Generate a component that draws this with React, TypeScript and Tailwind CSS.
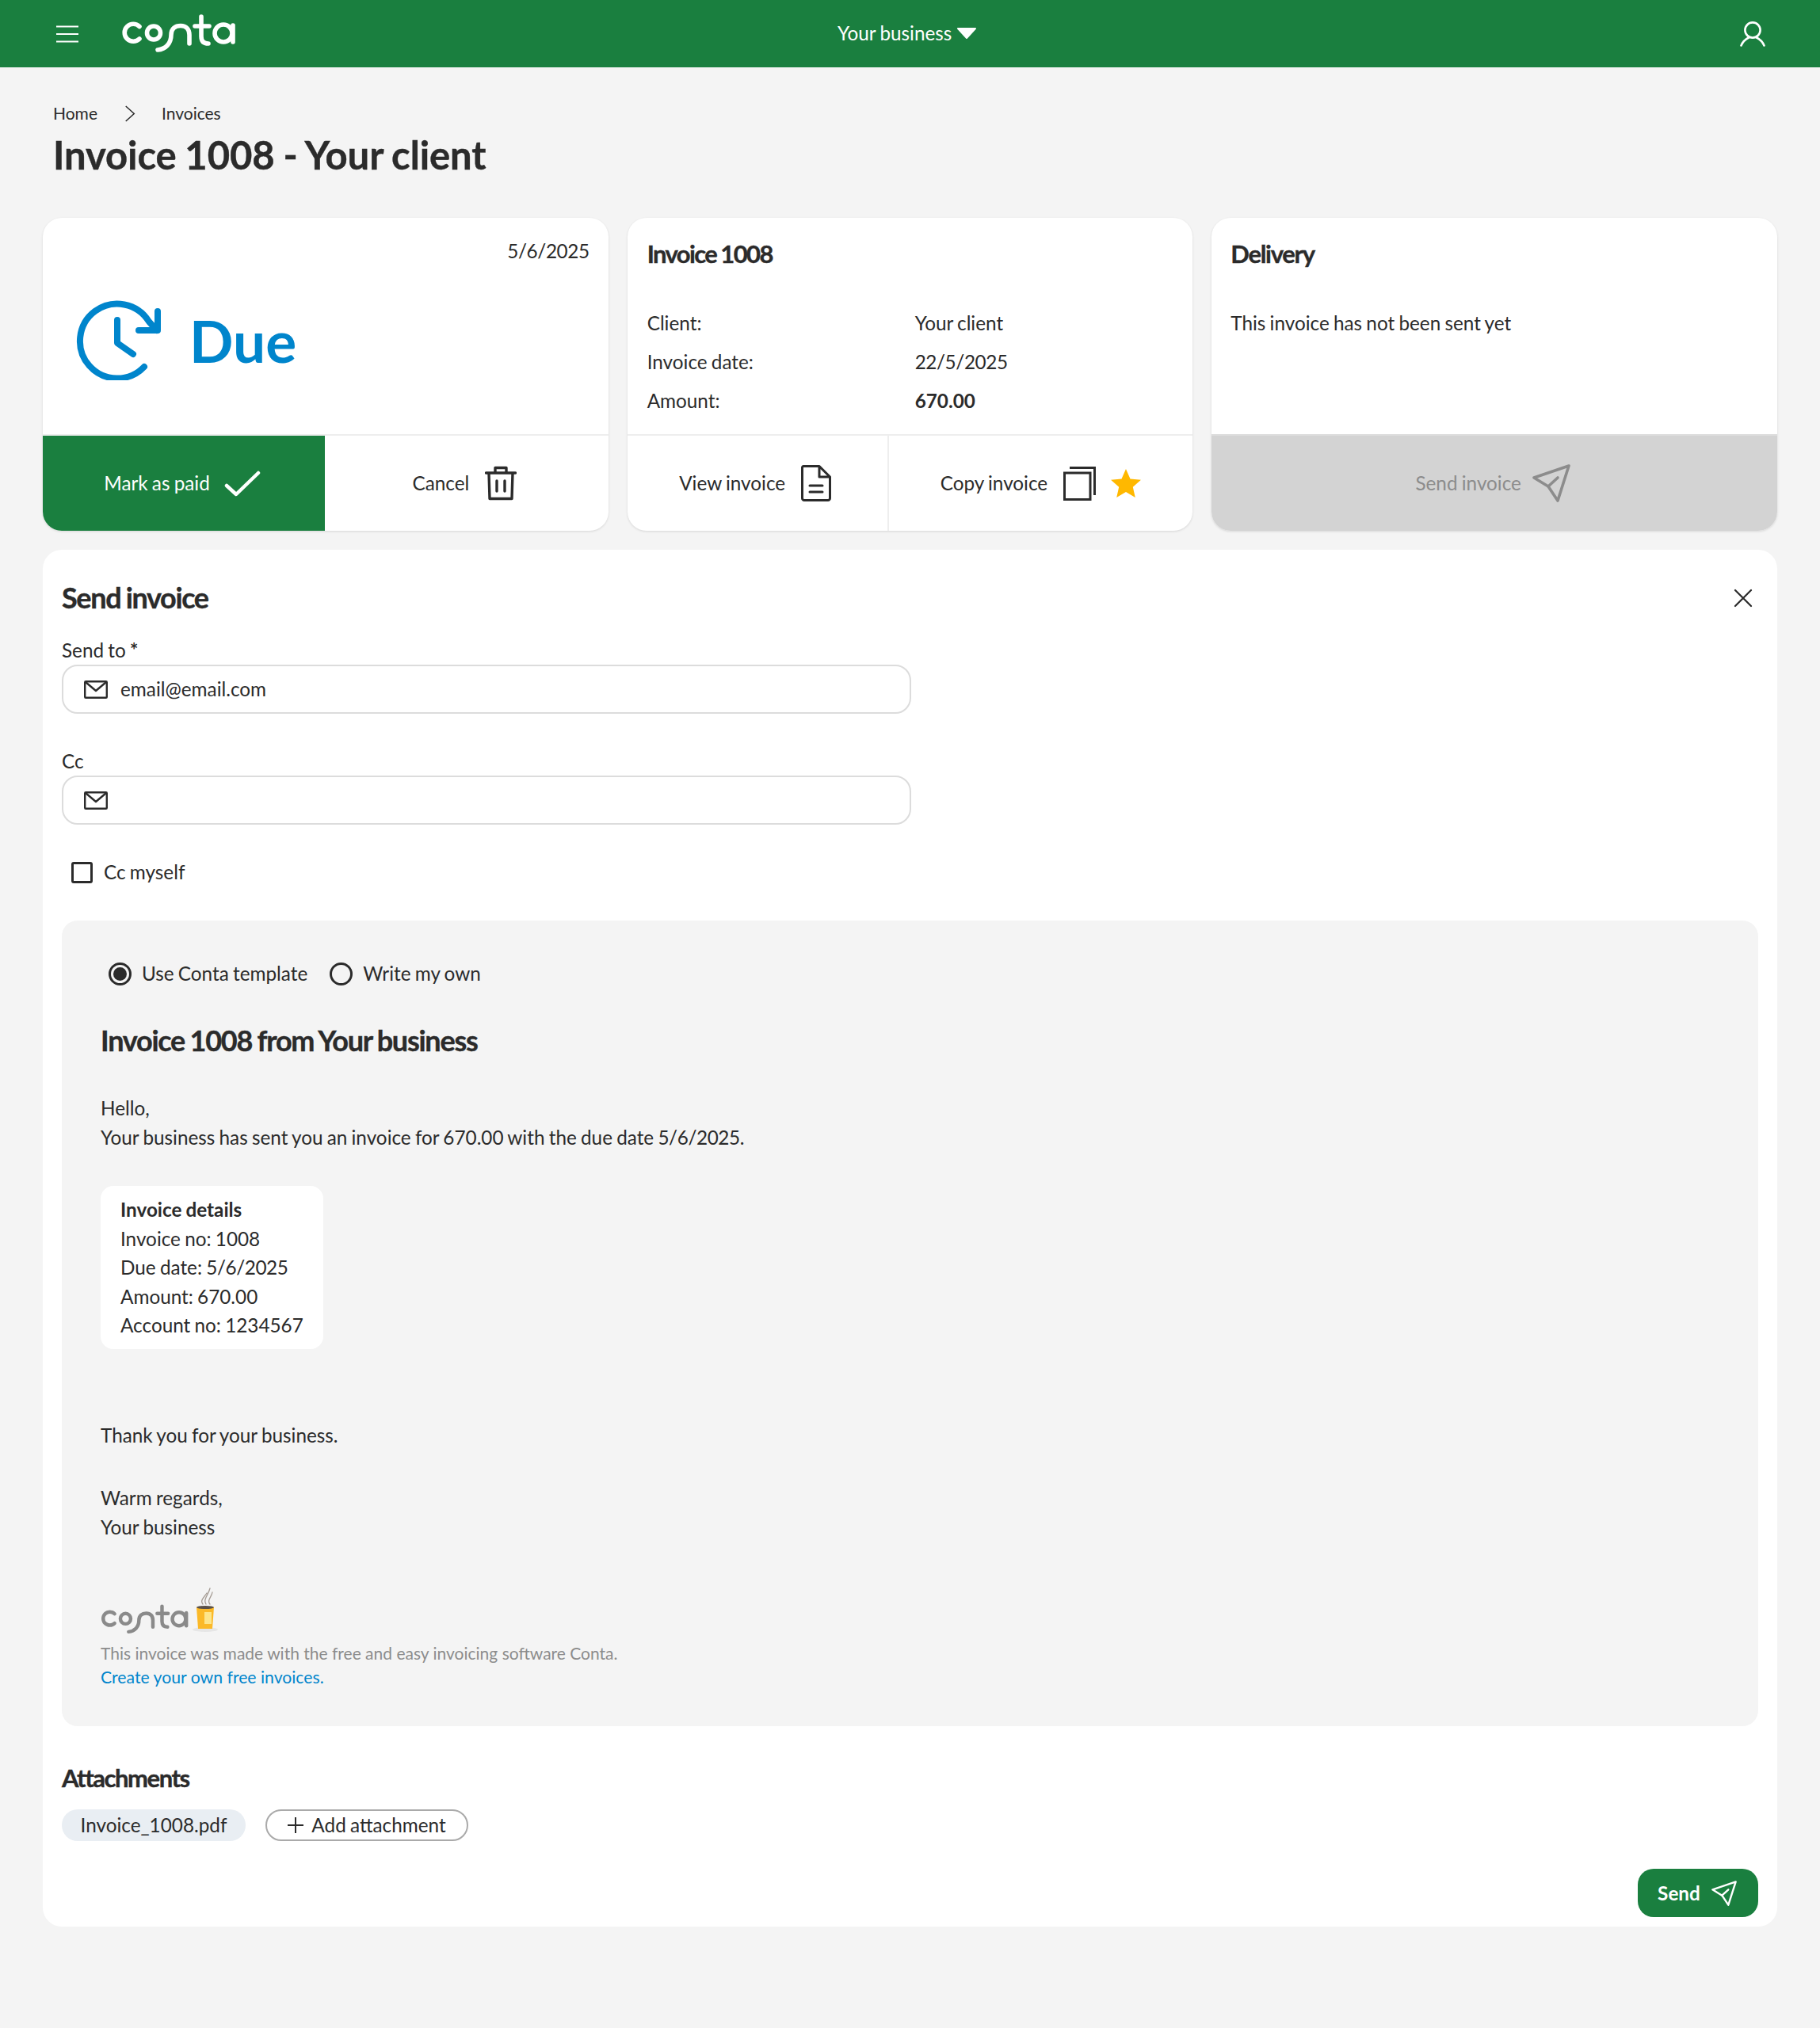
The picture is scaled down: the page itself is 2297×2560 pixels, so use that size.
import React from 'react';

const GREEN = 'bg-[#1a7f3f]';
const HEAVY = '[-webkit-text-stroke:0.4px_#2b2b2b]';

function ContaLogo({ color, className }: { color: string; className: string }) {
  return (
    <svg viewBox="22 18 146 50" className={className} fill="none" stroke={color} strokeWidth="5.6" strokeLinecap="round">
      <path d="M45 33.5A11 11 0 1 0 45 49" />
      <circle cx="63" cy="41.5" r="8.5" />
      <path d="M68 63C78 62 85 55 85 44C85 36 90 32.5 97 32.5C104 32.5 108 37 108 44V55" />
      <path d="M123 21V46C123 52 126 55 132 55M115 33H133" />
      <circle cx="151" cy="42" r="11" />
      <path d="M163 32V53" />
    </svg>
  );
}

function SendIcon({ color, className }: { color: string; className: string }) {
  return (
    <svg viewBox="0 0 48 48" className={className} fill="none" stroke={color} strokeWidth="3.6" strokeLinecap="round" strokeLinejoin="round">
      <path d="M46 2L2 17L20 28L32 46Z" />
      <path d="M20 28L32 17" />
    </svg>
  );
}

function MailIcon() {
  return (
    <svg viewBox="0 0 30 23" className="w-[30px] h-[23px] shrink-0" fill="none" stroke="#2b2b2b" strokeWidth="2.4" strokeLinejoin="round">
      <rect x="1.2" y="1.2" width="27.6" height="20.6" rx="1" />
      <path d="M2 2L15 13L28 2" />
    </svg>
  );
}

// slashes sit closer together in the reference's dates
function DateText({ children }: { children: React.ReactNode }) {
  return <span className="tracking-[-0.4px]">{children}</span>;
}

function ActionButton({ label, children, className }: { label: string; children: React.ReactNode; className: string }) {
  return (
    <div className={`flex items-center justify-center ${className}`}>
      <span>{label}</span>
      {children}
    </div>
  );
}

function EmailField({ label, value }: { label: React.ReactNode; value?: string }) {
  return (
    <div>
      <div className="h-[36px] leading-[36px]">{label}</div>
      <div className="w-[1072px] h-[62px] flex items-center pl-[26px] bg-white border-2 border-[#dcdcdc] rounded-[20px]">
        <MailIcon />
        <span className="ml-[16px]">{value}</span>
      </div>
    </div>
  );
}

export default function App() {
  return (
    <div className="min-h-[2560px] bg-[#f4f4f4] text-[#2b2b2b] font-['Lato',sans-serif] text-[24.3px] leading-[36px] [word-spacing:-1px]">
      {/* Header */}
      <header className={`h-[85px] ${GREEN} flex items-center justify-between text-white relative`}>
        <div className="flex items-center">
          <svg viewBox="0 0 28 22" className="w-[28px] h-[22px] ml-[71px]" stroke="white" strokeWidth="2">
            <path d="M0 1.5H28M0 11H28M0 20.5H28" />
          </svg>
          <ContaLogo color="white" className="w-[146px] h-[50px] ml-[54px]" />
        </div>
        <div className="absolute left-[1057px] top-0 h-[84px] flex items-center">
          <span>Your business</span>
          <svg viewBox="0 0 26 14" className="w-[26px] h-[14px] ml-[6px]" fill="white" stroke="white" strokeWidth="2" strokeLinejoin="round">
            <path d="M2 1H24L13 13Z" />
          </svg>
        </div>
        <svg viewBox="0 0 32 32" className="w-[32px] h-[32px] mr-[69px]" fill="none" stroke="white" strokeWidth="2.6" strokeLinecap="round">
          <circle cx="16" cy="11" r="9.6" />
          <path d="M1.5 30.5C4 24.5 9 21.5 11 20.5M30.5 30.5C28 24.5 23 21.5 21 20.5" />
        </svg>
      </header>

      <main className="px-[54px]">
        {/* Breadcrumb */}
        <div className="pl-[13px] pt-[40px] h-[76px] flex items-center text-[21px]">
          <span>Home</span>
          <svg viewBox="0 0 14 22" className="w-[14px] h-[21px] ml-[34px]" fill="none" stroke="#2b2b2b" strokeWidth="1.6">
            <path d="M1.5 1L12.5 11L1.5 21" />
          </svg>
          <span className="ml-[33px]">Invoices</span>
        </div>
        <h1 className={`pl-[13px] text-[49px] leading-[64px] font-bold tracking-[-0.1px] mt-[2px] ${HEAVY}`}>Invoice 1008 - Your client</h1>

        {/* Summary cards */}
        <div className="grid grid-cols-3 gap-[24px] mt-[48px]">
          <section className="h-[395px] bg-white rounded-[24px] shadow-[0_1px_3px_rgba(0,0,0,0.12)] overflow-hidden flex flex-col">
            <div className="h-[275px] px-[24px] pt-[24px] border-b-2 border-[#eeeeee] relative">
              <div className="text-right"><DateText>5/6/2025</DateText></div>
              <div className="flex items-center mt-[44px] ml-[18px]">
                <svg viewBox="0 0 107 101" className="w-[107px] h-[101px]" fill="none" stroke="#0085cc" strokeWidth="8" strokeLinecap="round" strokeLinejoin="round">
                  <path d="M86 84A47 47 0 1 1 92 27L102 38" />
                  <path d="M103 14V38H79" />
                  <path d="M52 25V54L72 68" />
                </svg>
                <span className="ml-[36px] text-[73px] leading-[88px] font-bold text-[#0085cc]">Due</span>
              </div>
            </div>
            <div className="flex-1 flex">
              <ActionButton label="Mark as paid" className={`w-[356px] ${GREEN} text-white pr-[4px]`}>
                <svg viewBox="0 0 46 33" className="w-[46px] h-[33px] ml-[18px]" fill="none" stroke="white" strokeWidth="4.5" strokeLinecap="round" strokeLinejoin="round">
                  <path d="M3 19L15 30L43 3" />
                </svg>
              </ActionButton>
              <ActionButton label="Cancel" className="flex-1 pr-[5px]">
                <svg viewBox="0 0 40 44" className="w-[40px] h-[44px] ml-[20px]" fill="none" stroke="#2b2b2b" strokeWidth="3.4" strokeLinecap="round" strokeLinejoin="round">
                  <path d="M1.5 9H38.5M5 9L6 41.5H34L35 9M13 9V2.5H27V9M15 19V32M25 19V32" />
                </svg>
              </ActionButton>
            </div>
          </section>

          <section className="h-[395px] bg-white rounded-[24px] shadow-[0_1px_3px_rgba(0,0,0,0.12)] overflow-hidden flex flex-col">
            <div className="h-[275px] pl-[25px] pr-[24px] pt-[23px] border-b-2 border-[#eeeeee]">
              <h2 className={`text-[31px] leading-[44px] font-bold tracking-[-1.6px] ${HEAVY}`}>Invoice 1008</h2>
              <div className="mt-[41px] leading-[49px]">
                <div className="flex"><span className="w-[338px]">Client:</span><span>Your client</span></div>
                <div className="flex"><span className="w-[338px]">Invoice date:</span><DateText>22/5/2025</DateText></div>
                <div className="flex"><span className="w-[338px]">Amount:</span><span className="font-bold">670.00</span></div>
              </div>
            </div>
            <div className="flex-1 flex">
              <ActionButton label="View invoice" className="w-[330px] border-r-2 border-[#eeeeee] pr-[5px]">
                <svg viewBox="0 0 38 46" className="w-[38px] h-[46px] ml-[20px]" fill="none" stroke="#2b2b2b" strokeWidth="3" strokeLinejoin="round" strokeLinecap="round">
                  <path d="M3 1.5H23L36.5 15V42A2.5 2.5 0 0 1 34 44.5H4A2.5 2.5 0 0 1 1.5 42V3A1.5 1.5 0 0 1 3 1.5ZM23 1.5V15H36.5M11 26H27M11 34H27" />
                </svg>
              </ActionButton>
              <ActionButton label="Copy invoice" className="flex-1">
                <svg viewBox="0 0 41 43" className="w-[41px] h-[43px] ml-[20px]" fill="none" stroke="#2b2b2b" strokeWidth="3">
                  <rect x="1.5" y="8" width="32.5" height="33.5" />
                  <path d="M8 1.5H39.5V36" />
                </svg>
                <svg viewBox="0 0 38 36" className="w-[38px] h-[36px] ml-[19px]" fill="#ffb800">
                  <path d="M19 0L24.5 12.5L38 13.8L27.8 22.8L30.8 36L19 29L7.2 36L10.2 22.8L0 13.8L13.5 12.5Z" />
                </svg>
              </ActionButton>
            </div>
          </section>

          <section className="h-[395px] bg-white rounded-[24px] shadow-[0_1px_3px_rgba(0,0,0,0.12)] overflow-hidden flex flex-col">
            <div className="h-[275px] px-[24px] pt-[23px] border-b-2 border-[#dddddd]">
              <h2 className={`text-[31px] leading-[44px] font-bold tracking-[-1.3px] ${HEAVY}`}>Delivery</h2>
              <p className="mt-[41px] leading-[49px]">This invoice has not been sent yet</p>
            </div>
            <ActionButton label="Send invoice" className="flex-1 bg-[#d3d3d3] text-[#8c8c8c] pr-[4px]">
              <SendIcon color="#8c8c8c" className="w-[48px] h-[48px] ml-[14px]" />
            </ActionButton>
          </section>
        </div>

        {/* Send invoice panel */}
        <section className="mt-[24px] h-[1738px] bg-white rounded-[24px] px-[24px] relative">
          <h2 className={`pt-[36px] text-[36px] leading-[48px] font-bold tracking-[-1.35px] ${HEAVY}`}>Send invoice</h2>
          <svg viewBox="0 0 24 24" className="w-[24px] h-[24px] absolute right-[31px] top-[49px]" fill="none" stroke="#2b2b2b" strokeWidth="2.2" strokeLinecap="round">
            <path d="M2 2L22 22M22 2L2 22" />
          </svg>

          <div className="mt-[25px] flex flex-col gap-[42px]">
            <EmailField label={<>Send to <span className="font-bold">*</span></>} value="email@email.com" />
            <EmailField label="Cc" />
          </div>

          <label className="flex items-center mt-[46px] pl-[12px] h-[28px]">
            <span className="w-[27px] h-[27px] border-[3px] border-[#2b2b2b] rounded-[3px]" />
            <span className="ml-[14px]">Cc myself</span>
          </label>

          {/* Mail preview */}
          <div className="mt-[47px] h-[1017px] bg-[#f4f4f4] rounded-[20px] pl-[49px] pt-[49px]">
            <div className="flex items-center ml-[10px] h-[36px]">
              <span className="w-[29px] h-[29px] rounded-full border-[3px] border-[#2b2b2b] flex items-center justify-center">
                <span className="w-[17px] h-[17px] rounded-full bg-[#2b2b2b]" />
              </span>
              <span className="ml-[13px]">Use Conta template</span>
              <span className="w-[29px] h-[29px] rounded-full border-[3px] border-[#2b2b2b] ml-[28px]" />
              <span className="ml-[13px]">Write my own</span>
            </div>
            <h2 className={`mt-[42px] text-[36px] leading-[48px] font-bold tracking-[-1.25px] ${HEAVY}`}>Invoice 1008 from Your business</h2>
            <p className="mt-[44px] leading-[36.5px]">
              Hello,
              <br />
              Your business has sent you an invoice for 670.00 with the due date <DateText>5/6/2025.</DateText>
            </p>
            <div className="mt-[43px] w-[281px] h-[206px] bg-white rounded-[16px] pl-[25px] pr-[24px] py-[12px] leading-[36.5px]">
              <div className="font-bold">Invoice details</div>
              <div>Invoice no: 1008</div>
              <div>Due date: <DateText>5/6/2025</DateText></div>
              <div>Amount: 670.00</div>
              <div>Account no: 1234567</div>
            </div>
            <p className="mt-[91px]">Thank you for your business.</p>
            <p className="mt-[42px] leading-[37px]">
              Warm regards,
              <br />
              Your business
            </p>
            <svg viewBox="0 0 150 64" className="w-[150px] h-[64px] mt-[55px]">
              <svg x="0" y="24" width="112" height="39" viewBox="22 18 146 50" fill="none" stroke="#8a8a8a" strokeWidth="5.8" strokeLinecap="round">
                <path d="M45 33.5A11 11 0 1 0 45 49" />
                <circle cx="63" cy="41.5" r="8.5" />
                <path d="M68 63C78 62 85 55 85 44C85 36 90 32.5 97 32.5C104 32.5 108 37 108 44V55" />
                <path d="M123 21V46C123 52 126 55 132 55M115 33H133" />
                <circle cx="151" cy="42" r="11" />
                <path d="M163 32V53" />
              </svg>
              <ellipse cx="132" cy="56" rx="16" ry="3" fill="#e6e6e6" />
              <path d="M121 28H143L141 55H123Z" fill="#fbb928" />
              <ellipse cx="132" cy="28" rx="11" ry="2" fill="#5a5048" />
              <rect x="131" y="34" width="9" height="15" fill="#fde58a" />
              <path d="M129 24C125 19 131 15 134 10M133 24C129 18 136 12 138 4M138 24C134 19 140 15 141 9" fill="none" stroke="#a59c94" strokeWidth="1.3" strokeLinecap="round" />
            </svg>
            <div className="mt-[7px] text-[21px] leading-[30px] text-[#8c8c8c] [word-spacing:0]">This invoice was made with the free and easy invoicing software Conta.</div>
            <div className="text-[21.2px] leading-[30px] text-[#0085cc] [word-spacing:0]">Create your own free invoices.</div>
          </div>

          {/* Attachments */}
          <h3 className={`mt-[41px] text-[31px] leading-[48px] font-bold tracking-[-1.45px] ${HEAVY}`}>Attachments</h3>
          <div className="flex mt-[16px] gap-[25px]">
            <span className="h-[40px] w-[232px] rounded-full bg-[#e9eef3] flex items-center justify-center">Invoice_1008.pdf</span>
            <span className="h-[40px] w-[256px] rounded-full bg-white border-2 border-[#aaaaaa] flex items-center justify-center">
              <svg viewBox="0 0 20 20" className="w-[20px] h-[20px] mr-[10px]" stroke="#2b2b2b" strokeWidth="2">
                <path d="M10 0V20M0 10H20" />
              </svg>
              Add attachment
            </span>
          </div>
          <div className="flex justify-end mt-[35px]">
            <button className={`w-[152px] h-[61px] rounded-[20px] ${GREEN} text-white font-bold flex items-center justify-center pr-[2px]`}>
              Send
              <SendIcon color="white" className="w-[32px] h-[32px] ml-[14px]" />
            </button>
          </div>
        </section>
      </main>
    </div>
  );
}
